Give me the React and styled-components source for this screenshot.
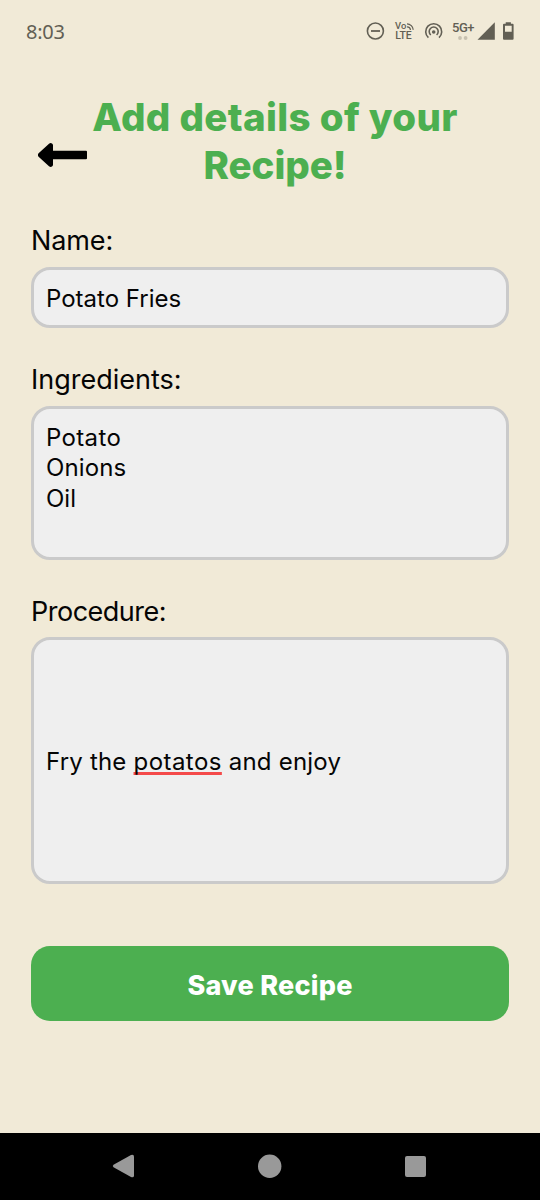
import React from "react";
import styled, { createGlobalStyle } from "styled-components";

const GlobalStyle = createGlobalStyle`
  * { box-sizing: border-box; }
  body { margin: 0; background: #f1ead7; font-family: Inter, "Liberation Sans", sans-serif; }
`;

const Screen = styled.div`
  width: 540px;
  height: 1200px;
  display: flex;
  flex-direction: column;
  background: #f1ead7;
  overflow: hidden;
`;

const StatusBar = styled.header`
  display: flex;
  justify-content: space-between;
  height: 63px;
  padding: 0 25px 0 26px;
  color: #625f54;
`;

const Clock = styled.time`
  margin-top: 20px;
  font: 400 20px/24px "Noto Sans", sans-serif;
  letter-spacing: -0.25px;
`;

const StatusIcons = styled.svg`
  display: block;
  margin-top: 16px;
  width: 150px;
  height: 30px;
`;

const TitleRow = styled.div`
  display: flex;
  height: 130px;
  padding: 30px 31px 0 38px;
`;

const BackButton = styled.button`
  width: 49px;
  height: 24px;
  margin: 50px 0 0;
  padding: 0;
  border: 0;
  background: none;
  svg { display: block; }
`;

const Title = styled.h1`
  width: 376px;
  margin: 0;
  color: #4caf50;
  text-align: center;
  font-size: 38.5px;
  line-height: 48px;
  font-weight: 800;
`;

const TitleLine = styled.span`
  display: block;
  white-space: nowrap;
  letter-spacing: ${(p) => p.$spacing}px;
`;

const Form = styled.form`
  display: flex;
  flex-direction: column;
  flex: 1;
  padding: 29px 31px 0;
`;

const Field = styled.div`
  display: flex;
  flex-direction: column;
  gap: ${(p) => p.$gap || 9}px;
  margin-bottom: ${(p) => p.$after}px;
`;

const Label = styled.label`
  height: 36px;
  padding-top: 1px;
  font-size: 27px;
  line-height: 36px;
  letter-spacing: ${(p) => p.$spacing}px;
  color: #050505;
`;

const Box = styled.div`
  display: flex;
  flex-direction: column;
  justify-content: ${(p) => (p.$top ? "flex-start" : "center")};
  height: ${(p) => p.$height}px;
  padding: ${(p) => (p.$top ? 13.5 : 2.5)}px 12px 0;
  border: 3px solid #cacaca;
  border-radius: 19px;
  background: #efefef;
  color: #050505;
  font-size: 24px;
  line-height: 30.5px;
`;

const Line = styled.div`
  white-space: nowrap;
  letter-spacing: ${(p) => p.$spacing || 0}px;
`;

const Misspelled = styled.span`
  letter-spacing: 0.45px;
  text-decoration: underline #f44a4a 2.5px;
  text-underline-offset: 2px;
  text-decoration-skip-ink: none;
`;

const SaveButton = styled.button`
  height: 75px;
  padding: 4px 0 0;
  border: 0;
  border-radius: 19px;
  background: #4caf50;
  color: #fff;
  font: 800 27px/36px Inter, sans-serif;
  letter-spacing: ${(p) => p.$spacing}px;
`;

const NavBar = styled.nav`
  display: flex;
  justify-content: space-between;
  height: 67px;
  padding: 21px 113px 0 112px;
  background: #000;
`;

const NavIcon = styled.svg`
  display: block;
  width: 24px;
  height: 24px;
  fill: #999;
`;

export default function App() {
  return (
    <Screen>
      <GlobalStyle />
      <StatusBar>
        <Clock>8:03</Clock>
        <StatusIcons viewBox="365 16 150 30" fill="none" stroke="#625f54">
          <circle cx="375.4" cy="31" r="8" strokeWidth="1.6" />
          <path d="M371 31h9" strokeWidth="1.8" />
          <g fill="#625f54" stroke="none" fontFamily="Roboto, sans-serif" fontWeight="500">
            <text x="395" y="29.4" fontSize="9.5" textLength="11.3">Vo</text>
            <text x="395.2" y="39.2" fontSize="10.5" textLength="16.5">LTE</text>
            <text x="452" y="31.8" fontSize="13" fontWeight="500" textLength="22.5">5G+</text>
          </g>
          <path d="M407 23.8c3.200 0 6.200 2.800 6.200 6M407 26.800c2 0 3.400 1.400 3.400 3.200" strokeWidth="1.3" />
          <g strokeWidth="1.6">
            <path d="M428.400 37.700a8 8 0 1 1 10.600 0" />
            <path d="M430.800 35a4.500 4.500 0 1 1 5.800 0" />
          </g>
          <circle cx="433.700" cy="32" r="1.800" fill="#625f54" stroke="none" />
          <g fill="#c8c1b0" stroke="none">
            <circle cx="460" cy="38" r="1.900" />
            <circle cx="465.600" cy="38" r="1.900" />
          </g>
          <path d="M477.500 39.800L494.800 22.300V39.800Z" fill="#625f54" stroke="none" />
          <path d="M505.700 22.200h5.200v1.600h1.700q1 0 1 1v14q0 1-1 1h-8.600q-1 0-1-1v-14q0-1 1-1h1.700zM505 25.800v6h6.700v-6z" fill="#625f54" fillRule="evenodd" stroke="none" />
        </StatusIcons>
      </StatusBar>
      <TitleRow>
        <BackButton type="button" aria-label="Back">
          <svg width="49" height="24" viewBox="0 0 49 24">
            <path d="M.6 10.300L11 .8Q12.500-.4 14 .5Q15 1 15 2.500V7.700H48Q49 7.700 49 8.700V15.300Q49 16.300 48 16.300H15V21.500Q15 23 14 23.500Q12.500 24.400 11 23.200L.6 13.700Q-.8 12 .6 10.300Z" />
          </svg>
        </BackButton>
        <Title>
          <TitleLine $spacing={0.35}>Add details of your</TitleLine>
          <TitleLine $spacing={-0.1}>Recipe!</TitleLine>
        </Title>
      </TitleRow>
      <Form>
        <Field $after={33}>
          <Label $spacing={-0.1}>Name:</Label>
          <Box $height={61}><Line>Potato Fries</Line></Box>
        </Field>
        <Field $after={33} $gap={9}>
          <Label $spacing={0}>Ingredients:</Label>
          <Box $height={154} $top>
            <Line $spacing={0.35}>Potato</Line>
            <Line $spacing={0.1}>Onions</Line>
            <Line>Oil</Line>
          </Box>
        </Field>
        <Field $after={62} $gap={8}>
          <Label $spacing={-0.5}>Procedure:</Label>
          <Box $height={247}>
            <Line $spacing={0.2}>Fry the <Misspelled>potatos</Misspelled> and enjoy</Line>
          </Box>
        </Field>
        <SaveButton type="button" $spacing={0.25}>Save Recipe</SaveButton>
      </Form>
      <NavBar>
        <NavIcon viewBox="0 0 24 24"><path d="M1.500 10.800L19 .9Q22 0 22 2.500V21.500Q22 24 19 23.100L1.500 13.300Q0 12 1.500 10.800Z" /></NavIcon>
        <NavIcon viewBox="0 0 24 24"><circle cx="11.700" cy="12.300" r="11.700" /></NavIcon>
        <NavIcon viewBox="0 0 24 24"><rect x="2" y="2" width="21" height="21" rx="2" /></NavIcon>
      </NavBar>
    </Screen>
  );
}
